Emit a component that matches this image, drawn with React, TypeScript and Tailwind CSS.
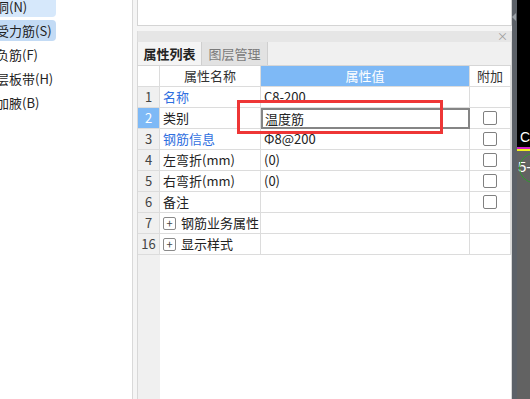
import React from 'react';

const font = { fontFamily: '"Noto Sans CJK SC", "Noto Sans", sans-serif' };

const leftItems = [
  { label: '洞(N)', bg: 'bg-[#d6e8fb]' },
  { label: '受力筋(S)', bg: 'bg-[#c3dbf5]' },
  { label: '负筋(F)', bg: '' },
  { label: '层板带(H)', bg: '' },
  { label: '加腋(B)', bg: '' },
];

type Row = { no: string; name: string; value?: string; blue?: boolean; check?: boolean; plus?: boolean; selected?: boolean };

const rows: Row[] = [
  { no: '1', name: '名称', value: 'C8-200', blue: true },
  { no: '2', name: '类别', value: '温度筋', check: true, selected: true },
  { no: '3', name: '钢筋信息', value: 'Φ8@200', blue: true, check: true },
  { no: '4', name: '左弯折(mm)', value: '(0)', check: true },
  { no: '5', name: '右弯折(mm)', value: '(0)', check: true },
  { no: '6', name: '备注', check: true },
  { no: '7', name: '钢筋业务属性', plus: true },
  { no: '16', name: '显示样式', plus: true },
];

function PlusBox() {
  return (
    <span className="w-[13px] h-[13px] border border-[#8a8a8a] rounded-[2px] flex items-center justify-center text-[11px] leading-none text-[#444] mr-[5px] shrink-0">
      +
    </span>
  );
}

export default function App() {
  return (
    <div className="relative w-[530px] h-[399px] flex overflow-hidden bg-white text-[13px]" style={font}>
      {/* Left list */}
      <div className="w-[133px] border-r border-[#d9d9d9] bg-white flex flex-col gap-[3px] -mt-[4px]">
        {leftItems.map((it) => (
          <div
            key={it.label}
            className={`h-[21px] w-[56px] rounded-r-[4px] flex items-center text-[13px] text-[#222] ${it.bg}`}
          >
            <span className="-ml-[4px] whitespace-nowrap">{it.label}</span>
          </div>
        ))}
      </div>

      {/* Main area */}
      <div className="flex-1 flex bg-[#f5f5f5] pl-[4px]">
        <div className="w-[375px] flex flex-col">
          <div className="h-[26px] bg-white border border-t-0 border-[#d4d4d4]" />
          <div className="h-[5px]" />
          <div className="h-[11px] bg-[#e6e6e6] flex justify-end items-center pr-[3px] border-x border-[#dcdcdc]">
            <span className="text-[11px] leading-none text-[#9a9a9a]">×</span>
          </div>
          <div className="h-[24px] bg-[#f0f0f0] flex items-stretch border-b border-x border-[#d6d6d6]">
            <div className="w-[63px] flex items-center justify-center text-[13px] font-semibold text-[#222] bg-[#f4f4f4]">
              属性列表
            </div>
            <div className="w-[67px] flex items-center justify-center text-[13px] text-[#7a7a7a] bg-[#e2e2e2] border-x border-[#cfcfcf]">
              图层管理
            </div>
          </div>

          <div className="flex-1 flex flex-col bg-white border-x border-[#d8d8d8]">
            <div className="grid grid-cols-[22px_101px_209px_41px]">
              <div className="h-[21px] bg-white border-r border-b border-[#dcdcdc]" />
              <div className="h-[21px] flex items-center justify-center border-r border-b border-[#dcdcdc] text-[#333]">
                属性名称
              </div>
              <div className="h-[21px] flex items-center justify-center bg-[#7eb9f6] text-white border-r border-b border-[#dcdcdc]">
                属性值
              </div>
              <div className="h-[21px] flex items-center justify-center border-r border-b border-[#dcdcdc] text-[#333]">
                附加
              </div>

              {rows.map((r) => (
                <React.Fragment key={r.no}>
                  <div
                    className={`h-[21px] flex items-center justify-center border-r border-b border-[#dcdcdc] ${
                      r.selected ? 'bg-[#7eb9f6] text-white' : 'bg-[#f0f0f0] text-[#444]'
                    }`}
                  >
                    {r.no}
                  </div>
                  <div
                    className={`h-[21px] flex items-center pl-[3px] border-r border-b border-[#dcdcdc] whitespace-nowrap ${
                      r.blue ? 'text-[#2f6fe0]' : 'text-[#222]'
                    }`}
                  >
                    {r.plus && <PlusBox />}
                    {r.name}
                  </div>
                  {r.selected ? (
                    <div className="h-[21px] flex items-center pl-[2px] border-2 border-[#858585] text-[#222]">
                      {r.value}
                    </div>
                  ) : (
                    <div className="h-[21px] flex items-center pl-[3px] border-r border-b border-[#dcdcdc] text-[#222]">
                      {r.value}
                    </div>
                  )}
                  <div className="h-[21px] flex items-center justify-center border-r border-b border-[#dcdcdc]">
                    {r.check && <span className="w-[14px] h-[14px] border border-[#808080] rounded-[2px] bg-white" />}
                  </div>
                </React.Fragment>
              ))}
            </div>
            <div className="flex-1 flex">
              <div className="w-[22px] bg-[#f0f0f0]" />
            </div>
          </div>
        </div>
      </div>

      {/* Splitter */}
      <div className="w-[5px] bg-[#5c6168] relative">
        <span className="absolute left-0 top-[13px] w-0 h-0 border-y-[4px] border-y-transparent border-r-[4px] border-r-[#9aa0a6]" />
      </div>

      {/* CAD canvas strip */}
      <div className="w-[13px] flex flex-col">
        <div className="h-[147px] bg-black relative">
          <span className="absolute left-[3px] top-[130px] text-white text-[14px] leading-none" style={{ fontFamily: '"Liberation Sans", sans-serif' }}>
            C
          </span>
        </div>
        <div className="h-[2px] bg-[#d020c8]" />
        <div className="h-[2px] bg-[#f0f020]" />
        <div className="flex-1 bg-[#626262] relative">
          <span className="absolute left-[1px] top-[8px] text-white text-[15px] leading-none" style={{ fontFamily: '"Liberation Sans", sans-serif' }}>
            5-
          </span>
          <span className="absolute left-[2px] top-[2px] w-[30px] h-[30px] rounded-full border border-[#2f9a2f]" />
        </div>
      </div>

      {/* Red annotation rectangle */}
      <div className="absolute left-[237px] top-[100px] w-[206px] h-[34px] border-[3px] border-[#ee3636] pointer-events-none" />
    </div>
  );
}
